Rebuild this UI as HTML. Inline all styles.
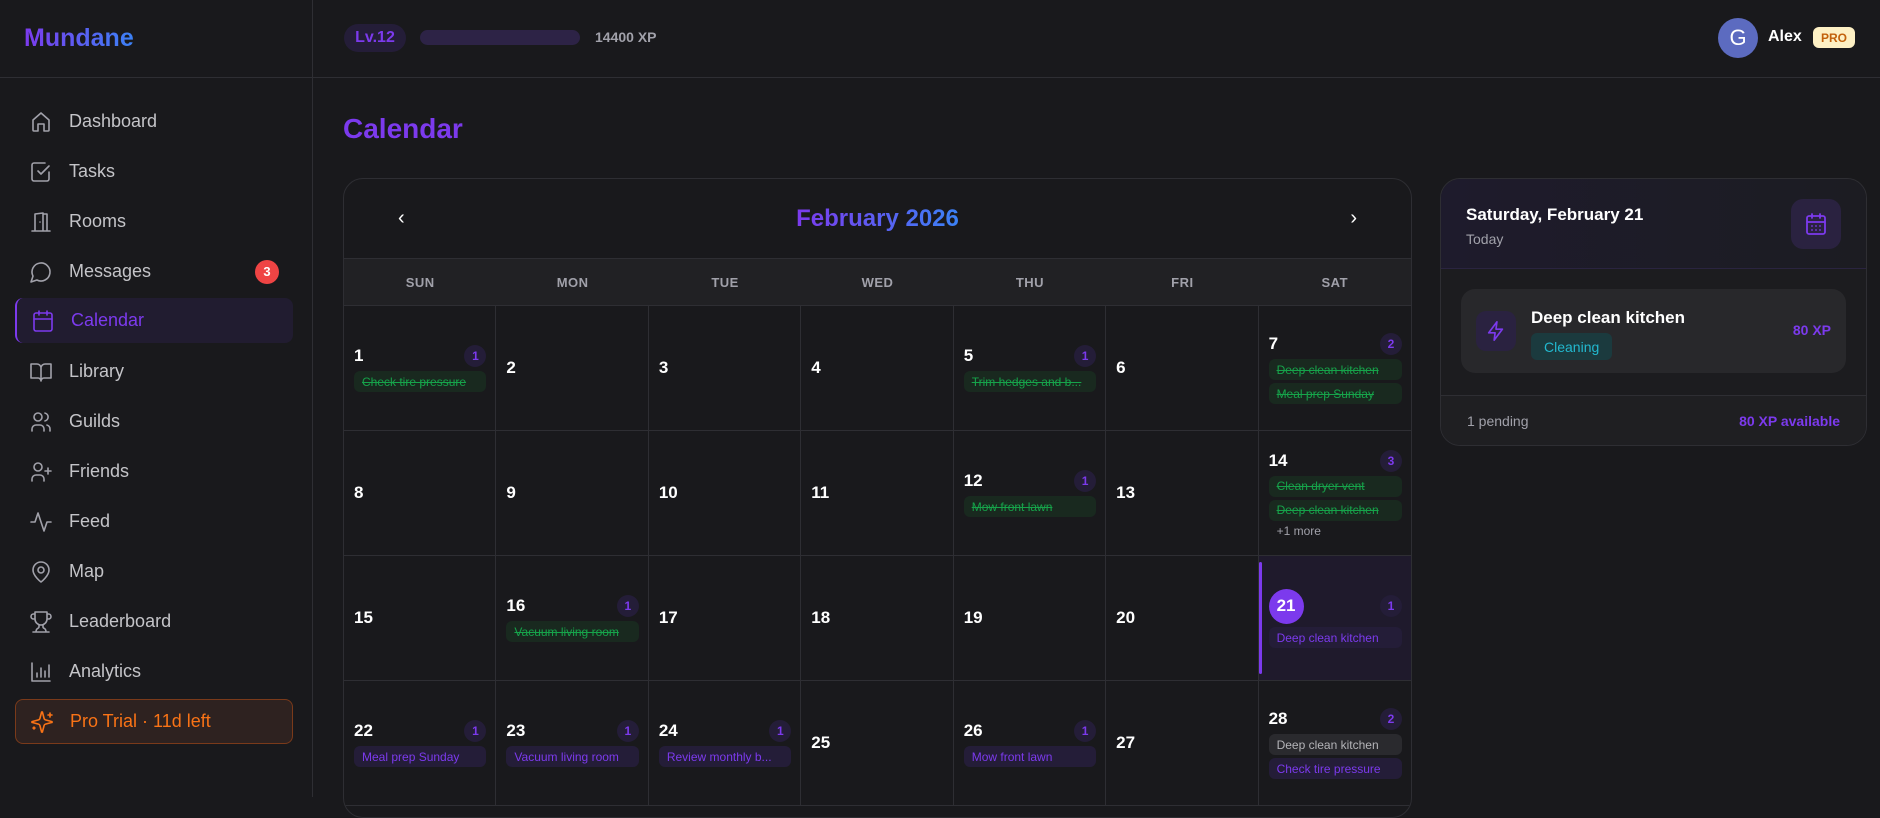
<!DOCTYPE html><html><head><meta charset="utf-8"><style>
*{box-sizing:border-box;margin:0;padding:0}
body{width:1880px;height:797px;overflow:hidden;background:#19191c;font-family:"Liberation Sans",sans-serif;color:#d4d4d8;position:relative}
.sb{position:absolute;left:0;top:0;width:313px;height:797px;border-right:1px solid #2e2e33;background:#19191c}
.logo{position:absolute;left:24px;top:24px;font-size:25px;font-weight:bold;background:linear-gradient(90deg,#7c3aed,#3b82f6);-webkit-background-clip:text;color:transparent}
.sbline{position:absolute;left:0;top:77px;width:1880px;height:1px;background:#2e2e33}
.nav{position:absolute;left:15px;width:278px;height:45px;display:flex;align-items:center;padding-left:14px;font-size:18px;color:#c4c4c8}
.nav svg{width:24px;height:24px;margin-right:16px;fill:none;stroke:#a1a1aa;stroke-width:1.6;stroke-linecap:round;stroke-linejoin:round}
.nav.act{background:#211c30;border-left:2px solid #7c3aed;border-radius:8px;color:#7c3aed}
.nav.act svg{stroke:#7c3aed}
.badge3{position:absolute;right:14px;width:24px;height:24px;border-radius:50%;background:#ef4444;color:#fff;font-size:13px;font-weight:bold;display:flex;align-items:center;justify-content:center}
.pro{background:#2e2220;border:1px solid #7a3a1a;border-radius:8px;color:#f97316}
.pro svg{stroke:#f97316}
.top{position:absolute;left:313px;top:0;right:0;height:77px}
.lv{position:absolute;left:344px;top:24px;width:62px;height:28px;border-radius:14px;background:#241d38;color:#7c3aed;font-weight:bold;font-size:16px;display:flex;align-items:center;justify-content:center}
.bar{position:absolute;left:420px;top:30px;width:160px;height:15px;border-radius:8px;background:#2d2346}
.xp{position:absolute;left:595px;top:29px;font-size:14px;color:#a1a1aa;font-weight:bold}
.av{position:absolute;left:1718px;top:18px;width:40px;height:40px;border-radius:50%;background:#5c6bc0;color:#fff;font-size:22px;display:flex;align-items:center;justify-content:center}
.alex{position:absolute;left:1768px;top:28px;color:#fff;font-weight:bold;font-size:16px}
.probadge{position:absolute;left:1813px;top:27px;width:42px;height:21px;border-radius:6px;background:#fdf0c4;color:#c2610c;font-size:12px;font-weight:bold;display:flex;align-items:center;justify-content:center}
h1{position:absolute;left:343px;top:113px;font-size:28px;color:#7c3aed;font-weight:bold}
.cal{position:absolute;left:343px;top:178px;width:1069px;height:640px;border:1px solid #2e2e33;border-radius:20px;overflow:hidden;background:#19191c}
.ch{height:80px;display:flex;align-items:center;justify-content:center;position:relative;border-bottom:1px solid #2e2e33}
.ch .t{font-size:24px;font-weight:bold;background:linear-gradient(90deg,#7c3aed,#3b82f6);-webkit-background-clip:text;color:transparent}
.arr{position:absolute;top:28px;color:#fff;font-size:20px}
.wd{height:47px;display:grid;grid-template-columns:repeat(7,1fr);background:#212124;border-bottom:1px solid #2e2e33}
.wd div{display:flex;align-items:center;justify-content:center;font-size:13px;color:#a1a1aa;font-weight:bold;letter-spacing:.5px}
.grid{display:grid;grid-template-columns:repeat(7,1fr);grid-auto-rows:125px}
.c{border-right:1px solid #2e2e33;border-bottom:1px solid #2e2e33;padding:0 9px 0 10px;display:flex;flex-direction:column;justify-content:center;position:relative}
.c:nth-child(7n){border-right:none}
.n{display:flex;justify-content:space-between;align-items:center;font-size:17px;font-weight:bold;color:#fff;height:24px}
.cnt{width:22px;height:22px;border-radius:50%;background:#241d38;color:#7c3aed;font-size:12px;font-weight:bold;display:flex;align-items:center;justify-content:center}
.p{height:21px;margin-top:3px;border-radius:6px;font-size:12px;padding:0 8px;display:flex;align-items:center;white-space:nowrap;overflow:hidden}
.g{background:#19291f;color:#16a34a;text-decoration:line-through}
.v{background:#241d38;color:#7c3aed}
.gr{background:#2a2a2e;color:#b4b4b8}
.more{font-size:12px;color:#a1a1aa;margin:3px 0 0 8px}
.today{background:#1f1a2c}
.today:before{content:"";position:absolute;left:0;top:6px;bottom:6px;width:3px;background:#7c3aed;border-radius:2px}
.circ{width:35px;height:35px;border-radius:50%;background:#7c3aed;display:flex;align-items:center;justify-content:center}
.rp{position:absolute;left:1440px;top:178px;width:427px;height:268px;border:1px solid #2e2e33;border-radius:20px;overflow:hidden;background:#1c1c1f}
.rh{height:90px;background:linear-gradient(90deg,#1e1b2c,#1c1c22);border-bottom:1px solid #2a2440;position:relative}
.rh .d{position:absolute;left:25px;top:26px;color:#fff;font-weight:bold;font-size:17px}
.rh .s{position:absolute;left:25px;top:52px;color:#a1a1aa;font-size:14px}
.ic{position:absolute;right:25px;top:20px;width:50px;height:50px;border-radius:12px;background:#2a2240;display:flex;align-items:center;justify-content:center}
.tk{position:absolute;left:20px;top:110px;width:385px;height:84px;border-radius:14px;background:#28282b}
.tk .bi{position:absolute;left:15px;top:22px;width:40px;height:40px;border-radius:10px;background:#2a2240;display:flex;align-items:center;justify-content:center}
.tk .nm{position:absolute;left:70px;top:19px;color:#fff;font-size:17px;font-weight:bold}
.tk .tag{position:absolute;left:70px;top:44px;height:27px;padding:0 13px;border-radius:6px;background:#1b3a3e;color:#22b8cf;font-size:14px;display:flex;align-items:center}
.tk .x{position:absolute;right:15px;top:33px;color:#7c3aed;font-weight:bold;font-size:14px}
.rf{position:absolute;left:0;right:0;top:216px;border-top:1px solid #2e2e33;height:52px;background:#1f1f22}
.rf .a{position:absolute;left:26px;top:17px;font-size:14px;color:#a1a1aa}
.rf .b{position:absolute;right:26px;top:17px;font-size:14px;color:#7c3aed;font-weight:bold}
</style></head><body>
<div class="sb"><div class="logo">Mundane</div>
<div class="nav" style="top:99px"><svg viewBox="0 0 24 24"><path d="M4 10l8-7 8 7v10a1 1 0 0 1-1 1h-4v-7h-6v7H5a1 1 0 0 1-1-1z"/></svg>Dashboard</div>
<div class="nav" style="top:149px"><svg viewBox="0 0 24 24"><path d="M9 11l3 3 8-8"/><path d="M20 12v7a2 2 0 0 1-2 2H5a2 2 0 0 1-2-2V5a2 2 0 0 1 2-2h11"/></svg>Tasks</div>
<div class="nav" style="top:199px"><svg viewBox="0 0 24 24"><path d="M3 21h18M6 21V4l8-1v18M14 4h4v17M11 12h.01"/></svg>Rooms</div>
<div class="nav" style="top:249px"><svg viewBox="0 0 24 24"><path d="M7.9 20A9 9 0 1 0 4 16.1L2 22z"/></svg>Messages<span class="badge3">3</span></div>
<div class="nav act" style="top:298px"><svg viewBox="0 0 24 24"><rect x="3" y="4" width="18" height="18" rx="2"/><path d="M16 2v4M8 2v4M3 10h18"/></svg>Calendar</div>
<div class="nav" style="top:349px"><svg viewBox="0 0 24 24"><path d="M2 4h6a4 4 0 0 1 4 4v13a3 3 0 0 0-3-3H2zM22 4h-6a4 4 0 0 0-4 4v13a3 3 0 0 1 3-3h7z"/></svg>Library</div>
<div class="nav" style="top:399px"><svg viewBox="0 0 24 24"><circle cx="9" cy="7" r="4"/><path d="M3 21v-2a4 4 0 0 1 4-4h4a4 4 0 0 1 4 4v2M16 3.1a4 4 0 0 1 0 7.8M21 21v-2a4 4 0 0 0-3-3.9"/></svg>Guilds</div>
<div class="nav" style="top:449px"><svg viewBox="0 0 24 24"><circle cx="9" cy="7" r="4"/><path d="M3 21v-2a4 4 0 0 1 4-4h4a4 4 0 0 1 4 4v2M19 8v6M16 11h6"/></svg>Friends</div>
<div class="nav" style="top:499px"><svg viewBox="0 0 24 24"><path d="M22 12h-4l-3 9L9 3l-3 9H2"/></svg>Feed</div>
<div class="nav" style="top:549px"><svg viewBox="0 0 24 24"><path d="M20 10c0 6-8 12-8 12s-8-6-8-12a8 8 0 0 1 16 0z"/><circle cx="12" cy="10" r="3"/></svg>Map</div>
<div class="nav" style="top:599px"><svg viewBox="0 0 24 24"><path d="M6 9H4.5a2.5 2.5 0 0 1 0-5H6M18 9h1.5a2.5 2.5 0 0 0 0-5H18M4 22h16M10 14.7V17c0 .6-.5 1-1 1.2C7.8 18.8 7 20.2 7 22M14 14.7V17c0 .6.5 1 1 1.2 1.2.6 2 2 2 3.8M18 2H6v7a6 6 0 0 0 12 0z"/></svg>Leaderboard</div>
<div class="nav" style="top:649px"><svg viewBox="0 0 24 24"><path d="M3 3v18h18M8 17v-4M12 17V8M16 17v-6M20 17V5"/></svg>Analytics</div>
<div class="nav pro" style="top:699px"><svg viewBox="0 0 24 24"><path d="M9.9 15.5A2 2 0 0 0 8.5 14.1L2.4 12.5a.5.5 0 0 1 0-1l6.1-1.6A2 2 0 0 0 9.9 8.5l1.6-6.1a.5.5 0 0 1 1 0l1.6 6.1a2 2 0 0 0 1.4 1.4l6.1 1.6a.5.5 0 0 1 0 1l-6.1 1.6a2 2 0 0 0-1.4 1.4l-1.6 6.1a.5.5 0 0 1-1 0zM20 3v4M22 5h-4M4 17v2M5 18H3"/></svg>Pro Trial · 11d left</div>
</div>
<div class="sbline"></div>
<div class="lv">Lv.12</div><div class="bar"></div><div class="xp">14400 XP</div>
<div class="av">G</div><div class="alex">Alex</div><div class="probadge">PRO</div>
<h1>Calendar</h1>
<div class="cal">
<div class="ch"><span class="arr" style="left:54px">‹</span><span class="t">February 2026</span><span class="arr" style="right:54px">›</span></div>
<div class="wd"><div>SUN</div><div>MON</div><div>TUE</div><div>WED</div><div>THU</div><div>FRI</div><div>SAT</div></div>
<div class="grid">
<div class="c"><div class="n">1<span class="cnt">1</span></div><div class="p g">Check tire pressure</div></div>
<div class="c"><div class="n">2</div></div><div class="c"><div class="n">3</div></div><div class="c"><div class="n">4</div></div>
<div class="c"><div class="n">5<span class="cnt">1</span></div><div class="p g">Trim hedges and b...</div></div>
<div class="c"><div class="n">6</div></div>
<div class="c"><div class="n">7<span class="cnt">2</span></div><div class="p g">Deep clean kitchen</div><div class="p g">Meal prep Sunday</div></div>
<div class="c"><div class="n">8</div></div><div class="c"><div class="n">9</div></div><div class="c"><div class="n">10</div></div><div class="c"><div class="n">11</div></div>
<div class="c"><div class="n">12<span class="cnt">1</span></div><div class="p g">Mow front lawn</div></div>
<div class="c"><div class="n">13</div></div>
<div class="c"><div class="n">14<span class="cnt">3</span></div><div class="p g">Clean dryer vent</div><div class="p g">Deep clean kitchen</div><div class="more">+1 more</div></div>
<div class="c"><div class="n">15</div></div>
<div class="c"><div class="n">16<span class="cnt">1</span></div><div class="p g">Vacuum living room</div></div>
<div class="c"><div class="n">17</div></div><div class="c"><div class="n">18</div></div><div class="c"><div class="n">19</div></div><div class="c"><div class="n">20</div></div>
<div class="c today"><div class="n" style="height:36px"><span class="circ">21</span><span class="cnt">1</span></div><div class="p v">Deep clean kitchen</div></div>
<div class="c"><div class="n">22<span class="cnt">1</span></div><div class="p v">Meal prep Sunday</div></div>
<div class="c"><div class="n">23<span class="cnt">1</span></div><div class="p v">Vacuum living room</div></div>
<div class="c"><div class="n">24<span class="cnt">1</span></div><div class="p v">Review monthly b...</div></div>
<div class="c"><div class="n">25</div></div>
<div class="c"><div class="n">26<span class="cnt">1</span></div><div class="p v">Mow front lawn</div></div>
<div class="c"><div class="n">27</div></div>
<div class="c"><div class="n">28<span class="cnt">2</span></div><div class="p gr">Deep clean kitchen</div><div class="p v">Check tire pressure</div></div>
</div></div>
<div class="rp">
<div class="rh"><div class="d">Saturday, February 21</div><div class="s">Today</div>
<div class="ic"><svg width="24" height="24" viewBox="0 0 24 24" fill="none" stroke="#7c3aed" stroke-width="1.8" stroke-linecap="round"><rect x="3" y="4" width="18" height="18" rx="2"/><path d="M16 2v4M8 2v4M3 10h18M8 14h.01M12 14h.01M16 14h.01M8 18h.01M12 18h.01M16 18h.01"/></svg></div></div>
<div class="tk"><div class="bi"><svg width="22" height="22" viewBox="0 0 24 24" fill="none" stroke="#7c3aed" stroke-width="1.8" stroke-linejoin="round"><path d="M13 2L4 14h7l-1 8 9-12h-7z"/></svg></div>
<div class="nm">Deep clean kitchen</div><div class="tag">Cleaning</div><div class="x">80 XP</div></div>
<div class="rf"><span class="a">1 pending</span><span class="b">80 XP available</span></div>
</div>
</body></html>
